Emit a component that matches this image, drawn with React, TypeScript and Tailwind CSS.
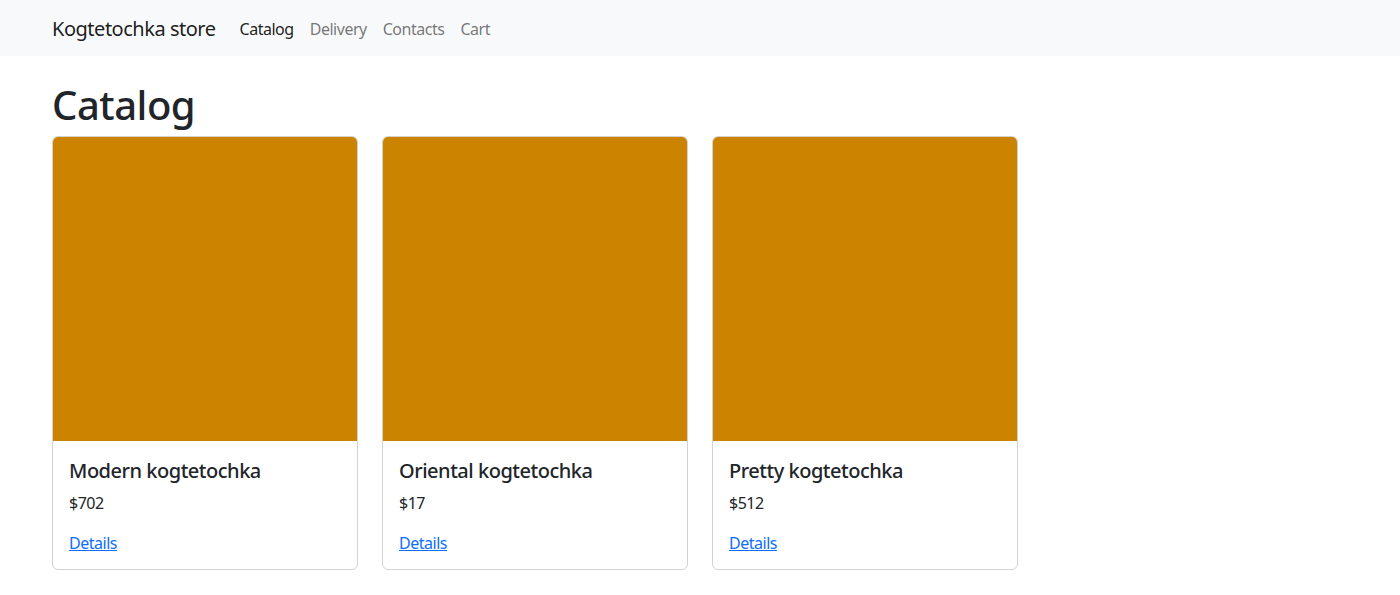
import React from 'react';

const items = [
  { name: 'Modern kogtetochka', price: 702 },
  { name: 'Oriental kogtetochka', price: 17 },
  { name: 'Pretty kogtetochka', price: 512 },
];

export default function App() {
  return (
    <div className="min-h-screen bg-white text-[#212529] font-['Noto_Sans',sans-serif] tracking-[-0.03em] text-base leading-6">
      {/* Navbar */}
      <nav className="bg-[#f8f9fa] h-14">
        <div className="max-w-[1320px] mx-auto px-3 h-full flex items-center pt-px">
          <a className="text-xl leading-[30px] text-black/90 mr-4">Kogtetochka store</a>
          <ul className="flex">
            <li><a className="px-2 block text-black/90">Catalog</a></li>
            <li><a className="px-2 block text-black/55">Delivery</a></li>
            <li><a className="px-2 block text-black/55">Contacts</a></li>
            <li><a className="px-2 block text-black/55">Cart</a></li>
          </ul>
        </div>
      </nav>

      {/* Content */}
      <main className="max-w-[1320px] mx-auto px-3 pt-6">
        <h1 className="text-[40px] leading-[48px] font-medium mb-2 pt-px">Catalog</h1>
        <div className="grid grid-cols-4 gap-6 -mt-px">
          {items.map((item) => (
            <div key={item.name} className="border border-black/[.175] rounded-md overflow-hidden flex flex-col">
              <div className="aspect-square bg-[#cc8400]" />
              <div className="p-4 pt-[18px] pb-[14px]">
                <h5 className="text-xl leading-6 font-medium mb-2">{item.name}</h5>
                <p className="mb-4">${item.price}</p>
                <a href="#" className="text-[#0d6efd] underline">Details</a>
              </div>
            </div>
          ))}
        </div>
      </main>
    </div>
  );
}
